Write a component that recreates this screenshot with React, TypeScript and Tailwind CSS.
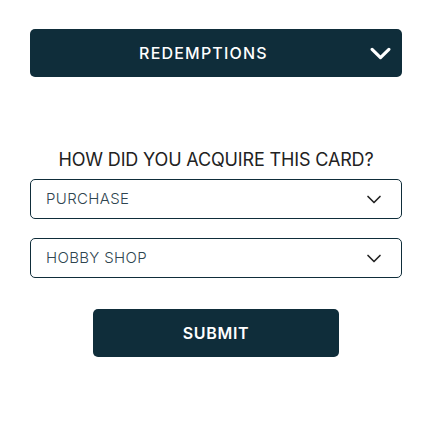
import { useState } from 'react';

const font = { fontFamily: 'Inter, "DejaVu Sans", sans-serif' };

function Chevron({ className }: { className: string }) {
  return (
    <svg viewBox="0 0 20 12" fill="none" className={className}>
      <path d="M2 2l8 8 8-8" stroke="currentColor" strokeLinecap="round" strokeLinejoin="round" />
    </svg>
  );
}

function SelectBox({ value }: { value: string }) {
  return (
    <div className="flex h-10 items-center justify-between rounded-[5px] border border-[#0f2d3a] pl-[15px] pr-[19px]">
      <span className="text-[15px] font-light tracking-[0.35px] text-[#2f4550]">{value}</span>
      <Chevron className="h-[9px] w-[16px] stroke-[2.2] text-[#222]" />
    </div>
  );
}

export default function App() {
  const [open, setOpen] = useState(false);

  return (
    <div className="min-h-[422px] bg-white pt-[29px]" style={font}>
      <div className="ml-[30px] w-[372px]">
        <button
          onClick={() => setOpen(!open)}
          className="flex h-12 w-full items-center rounded-[5px] bg-[#0f2d3a] pl-4 pr-[11px] text-white"
        >
          <span className="flex-1 text-center text-[16px] font-medium tracking-[1.2px]">REDEMPTIONS</span>
          <Chevron className="ml-[9px] h-[13px] w-[21px] stroke-[3] text-white" />
        </button>

        <h2 className="mt-[72px] text-center text-[18px] leading-[22px] tracking-[-0.15px] text-[#222]">
          HOW DID YOU ACQUIRE THIS CARD?
        </h2>

        <div className="mt-[8px] flex flex-col gap-[19px]">
          <SelectBox value="PURCHASE" />
          <SelectBox value="HOBBY SHOP" />
        </div>

        <div className="mt-[31px] flex justify-center">
          <button className="h-12 w-[246px] rounded-[5px] bg-[#0f2d3a] text-[16px] font-semibold tracking-[0.7px] text-white">
            SUBMIT
          </button>
        </div>
      </div>
    </div>
  );
}
